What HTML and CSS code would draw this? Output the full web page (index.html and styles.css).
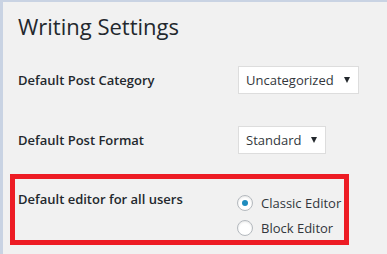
FILE: index.html
```html
<!DOCTYPE html>
<html lang="en">
<head>
    <meta charset="UTF-8">
    <title>Writing Settings</title>
    <link rel="stylesheet" href="styles.css">
</head>
<body>
    <div class="wrap">
        <h1>Writing Settings</h1>

        <div class="form-row">
            <div class="label">Default Post Category</div>
            <div class="field">
                <div class="select">Uncategorized<span class="arrow"></span></div>
            </div>
        </div>

        <div class="form-row">
            <div class="label">Default Post Format</div>
            <div class="field">
                <div class="select">Standard<span class="arrow"></span></div>
            </div>
        </div>

        <div class="form-row highlight">
            <div class="label">Default editor for all users</div>
            <div class="field radios">
                <label class="radio"><span class="circle checked"></span>Classic Editor</label>
                <label class="radio"><span class="circle"></span>Block Editor</label>
            </div>
        </div>
    </div>
</body>
</html>
```

FILE: styles.css
```css
body {
    margin: 0;
    background: #f1f1f1;
    border-left: 3px solid #c9d3e3;
    border-top: 2px solid #c9d3e3;
    min-height: 252px;
    font-family: "Open Sans", "Noto Sans", sans-serif;
    color: #23282d;
    font-size: 13px;
}
.wrap {
    padding-left: 15px;
}
h1 {
    margin: 0;
    padding-top: 9px;
    height: 39px;
    font-size: 22px;
    font-weight: 400;
    line-height: 30px;
    color: #23282d;
}
.form-row {
    display: flex;
    align-items: center;
    height: 60px;
}
.label {
    width: 220px;
    flex-shrink: 0;
    font-weight: 600;
    white-space: nowrap;
}
.select {
    display: inline-flex;
    align-items: center;
    height: 26px;
    padding: 0 8px 0 7px;
    background: #fff;
    border: 1px solid #ddd;
    color: #32373c;
}
.arrow {
    width: 0;
    height: 0;
    margin-left: 10px;
    border-left: 3.5px solid transparent;
    border-right: 3.5px solid transparent;
    border-top: 6px solid #23282d;
}
.highlight {
    box-sizing: border-box;
    align-items: flex-start;
    width: 339px;
    height: 71px;
    margin: 4px 0 0 -8px;
    padding: 10px 0 0 3px;
    border: 5px solid #ed1c24;
}
.highlight .label {
    width: 219px;
    line-height: 20px;
}
.radios {
    display: flex;
    flex-direction: column;
    padding-top: 1px;
}
.radio {
    display: flex;
    align-items: center;
    height: 25px;
    white-space: nowrap;
    color: #32373c;
}
.circle {
    box-sizing: border-box;
    width: 16px;
    height: 16px;
    margin-right: 8px;
    border: 1px solid #b4b9be;
    border-radius: 50%;
    background: #fff;
    box-shadow: inset 0 1px 2px rgba(0, 0, 0, 0.1);
    display: flex;
    align-items: center;
    justify-content: center;
}
.circle.checked::after {
    content: "";
    width: 6px;
    height: 6px;
    border-radius: 50%;
    background: #1e8cbe;
}
```
